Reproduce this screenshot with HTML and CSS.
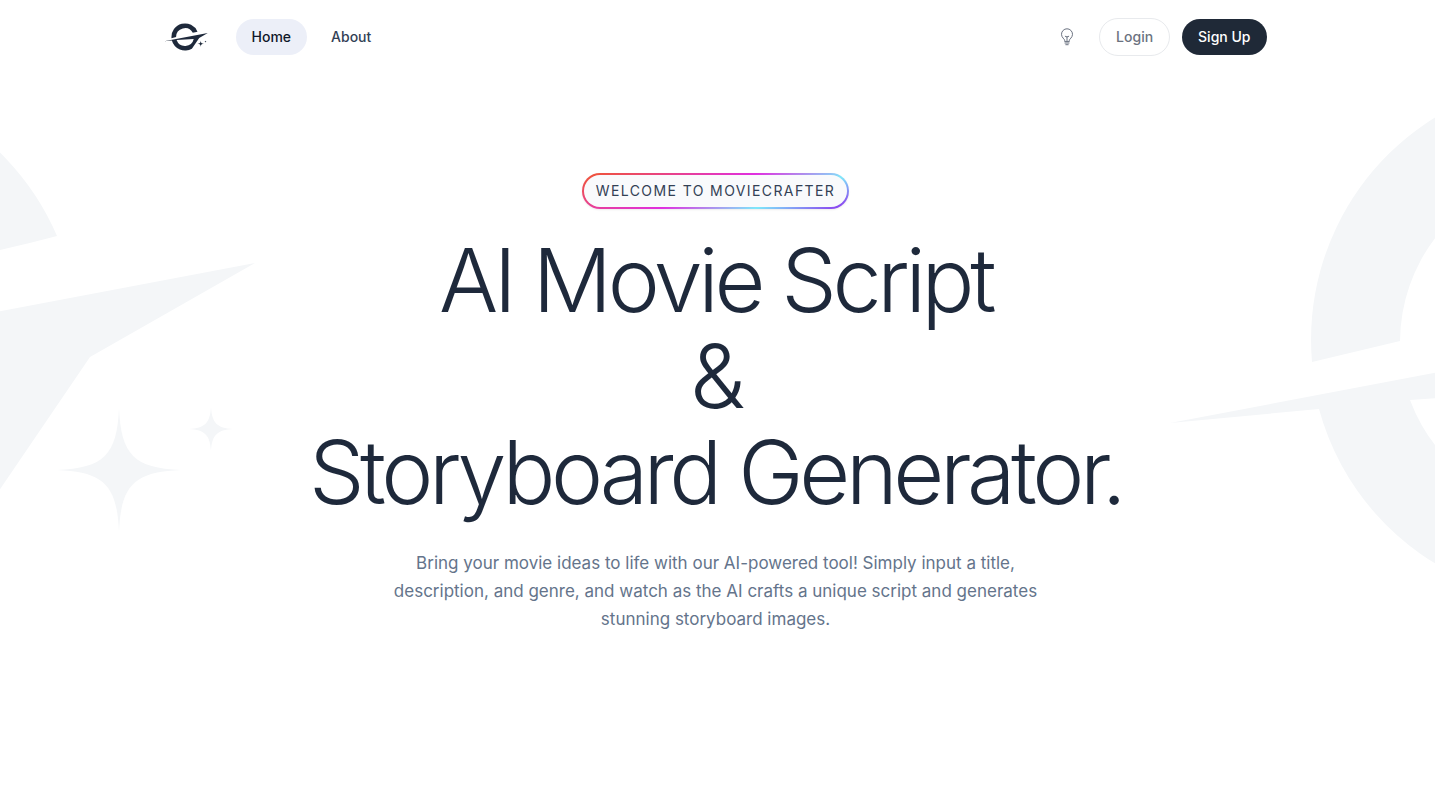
FILE: index.html
```html
<!DOCTYPE html>
<html lang="en">
<head>
<meta charset="utf-8">
<meta name="viewport" content="width=device-width, initial-scale=1">
<title>MovieCrafter</title>
<link rel="stylesheet" href="styles.css">
</head>
<body>
<svg class="defs" aria-hidden="true">
  <symbol id="planet" viewBox="-404 -261 846 522">
    <path d="M-260 22A261 261 0 0 1 240 -103Q195 -91 150 -82A172 172 0 0 0 -172 1Z"/>
    <path fill-rule="evenodd" d="M-402 83L438 -76L273 18L132 225A261 261 0 0 1 -253 69ZM-162 60A172 172 0 0 0 167 38Z"/>
    <path d="M302 69C304 116 317 129 364 131C317 133 304 146 302 193C300 146 287 133 240 131C287 129 300 116 302 69Z"/>
    <path d="M394 68C395 84 400 89 416 90C400 91 395 96 394 112C393 96 388 91 372 90C388 89 393 84 394 68Z"/>
  </symbol>
</svg>

<header class="header">
  <a class="brand" href="#" aria-label="MovieCrafter"><svg class="logo"><use href="#planet"/></svg></a>
  <nav class="nav">
    <a class="link active" href="#">Home</a>
    <a class="link" href="#">About</a>
  </nav>
  <div class="actions">
    <button class="theme" type="button" aria-label="Toggle theme">
      <svg class="bulb" viewBox="0 0 16 18" fill="none" stroke="currentColor" stroke-linecap="round" stroke-linejoin="round">
        <path d="M5.700 13.200V12.200C5.700 11.200 2.500 9.600 2.500 6.300A5.500 5.500 0 0 1 13.500 6.300C13.500 9.600 10.300 11.200 10.300 12.200V13.200ZM8 13V8.800M6.300 8.300L8 9L9.700 8.300M6 15H10M6.800 16.700H9.200"/>
      </svg>
    </button>
    <a class="button outline" href="#">Login</a>
    <a class="button solid" href="#">Sign Up</a>
  </div>
</header>

<main class="hero">
  <svg class="mark mark-left" aria-hidden="true"><use href="#planet"/></svg>
  <svg class="mark mark-right" aria-hidden="true"><use href="#planet"/></svg>
  <p class="badge">Welcome to MovieCrafter</p>
  <h1 class="title">AI Movie Script<br>&amp;<br>Storyboard Generator.</h1>
  <p class="intro">Bring your movie ideas to life with our AI-powered tool! Simply input a title, description, and genre, and watch as the AI crafts a unique script and generates stunning storyboard images.</p>
</main>
</body>
</html>
```
FILE: styles.css
```css
* {
  box-sizing: border-box;
}

body {
  margin: 0;
  min-height: 100vh;
  display: flex;
  flex-direction: column;
  background: #fff;
  color: #1e293b;
  font-family: Inter, "Liberation Sans", sans-serif;
  overflow-x: hidden;
}

.defs {
  display: none;
}

.header {
  width: 100%;
  max-width: 1140px;
  margin: 0 auto;
  padding: 18px 21px 0 16px;
  display: flex;
  align-items: center;
}

.brand {
  display: flex;
  margin-right: 28px;
  color: #1e293b;
}

.logo {
  width: 44px;
  height: 28px;
  fill: currentColor;
}

.nav {
  display: flex;
  gap: 8px;
}

.link,
.button {
  display: flex;
  align-items: center;
  height: 36px;
  padding: 0 16px;
  border-radius: 18px;
  font-size: 14px;
  font-weight: 500;
  line-height: 20px;
  text-decoration: none;
  color: #334155;
}

.active {
  background: #eceff8;
  color: #0f172a;
}

.actions {
  margin-left: auto;
  display: flex;
  align-items: center;
  gap: 12px;
}

.theme {
  display: flex;
  padding: 10px 12px;
  border: 0;
  background: none;
  color: #6b7280;
}

.bulb {
  width: 16px;
  height: 18px;
}

.outline {
  height: 38px;
  border: 1px solid #e8eaed;
  border-radius: 19px;
  color: #6b7280;
}

.solid {
  background: #1f2937;
  color: #fff;
}

.hero {
  position: relative;
  flex: 1;
  overflow: hidden;
  display: flex;
  flex-direction: column;
  align-items: center;
  padding: 117px 28px 80px 24px;
  text-align: center;
}

.mark {
  position: absolute;
  width: 846px;
  height: 522px;
  fill: #f4f6f8;
}

.mark-left {
  top: 22px;
  left: -587px;
}

.mark-right {
  top: 23px;
  right: -579px;
}

.badge,
.title,
.intro {
  position: relative;
  margin: 0;
}

.badge {
  padding: 6px 12px;
  border: 2px solid transparent;
  border-radius: 18px;
  background:
    linear-gradient(#f9fafc, #f9fafc) padding-box,
    linear-gradient(160deg, #f0562e, #e02fe0 48%, #7ee8fa 74%, #8b45f0 96%) border-box;
  box-shadow: 0 1px 2px rgb(0 0 0 / 8%);
  color: #334155;
  font-size: 14px;
  line-height: 20px;
  letter-spacing: 0.1em;
  text-transform: uppercase;
}

.title {
  margin-top: 23px;
  font-size: 88px;
  font-weight: 350;
  line-height: 96px;
  letter-spacing: -0.05em;
}

.intro {
  max-width: 672px;
  margin-top: 29px;
  color: #64748b;
  font-size: 17px;
  line-height: 28px;
}
```
